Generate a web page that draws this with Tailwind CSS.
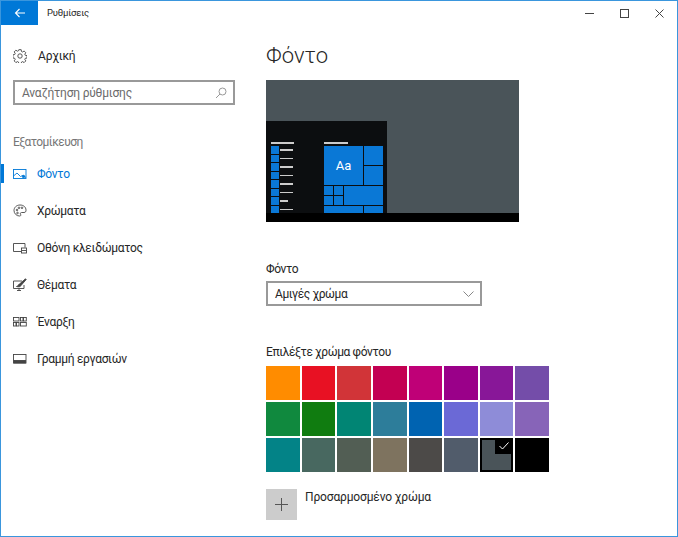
<!DOCTYPE html>
<html lang="el">
<head>
    <meta charset="UTF-8">
    <title>Ρυθμίσεις</title>
    <script src="https://cdn.jsdelivr.net/npm/@tailwindcss/browser@4"></script>
</head>
<body class="bg-white">
<div class="w-[678px] h-[537px] overflow-hidden border border-[#3a96dd] bg-white text-[#262626] font-['Roboto',sans-serif] flex flex-col">
    <!-- title bar -->
    <header class="h-[24px] flex items-center shrink-0">
        <button class="w-[37px] h-[24px] bg-[#0078d7] flex items-center justify-center">
            <svg width="12" height="12" viewBox="0 0 12 12" fill="none" stroke="#fff" stroke-width="1.1"><path d="M1.500 6H11M5.500 2 1.500 6l4 4"/></svg>
        </button>
        <span class="ml-[9px] text-[9.500px] tracking-[-0.2px] leading-none">Ρυθμίσεις</span>
        <div class="ml-auto flex items-center pr-[13px] gap-[26px]">
            <svg width="9" height="9" viewBox="0 0 9 9" stroke="#444" fill="none"><path d="M0 4.500h9"/></svg>
            <svg width="9" height="9" viewBox="0 0 9 9" stroke="#444" fill="none"><rect x=".5" y=".5" width="8" height="8"/></svg>
            <svg width="9" height="9" viewBox="0 0 9 9" stroke="#444" fill="none"><path d="M.5.5l8 8M8.500.5l-8 8"/></svg>
        </div>
    </header>

    <div class="flex flex-1 min-h-0">
        <!-- sidebar -->
        <aside class="w-[265px] shrink-0 pt-[21px]">
            <a class="flex items-center h-[20px] pl-[12px] text-[12px] tracking-[-0.2px]">
                <svg width="14" height="14" viewBox="0 0 14 14" fill="none" stroke="#444" stroke-width=".9"><circle cx="7" cy="7" r="2.200"/><path d="M5.800.7h2.400l.3 1.800 1.100.5 1.500-1 1.700 1.700-1 1.500.5 1.100 1.800.3v2.400l-1.800.3-.5 1.100 1 1.500-1.700 1.700-1.500-1-1.100.5-.3 1.800H5.800l-.3-1.800-1.100-.5-1.500 1-1.700-1.700 1-1.500-.5-1.100-1.800-.3V5.800l1.800-.3.5-1.100-1-1.500 1.700-1.700 1.500 1 1.100-.5z"/></svg>
                <span class="ml-[11px]">Αρχική</span>
            </a>
            <div class="ml-[12px] mt-[14px] w-[222px] h-[25px] border-2 border-[#999] flex items-center pl-[7px] pr-[6px]">
                <span class="text-[12px] tracking-[-0.2px] text-[#6b6b6b]">Αναζήτηση ρύθμισης</span>
                <svg class="ml-auto" width="12" height="12" viewBox="0 0 12 12" fill="none" stroke="#999"><circle cx="7.500" cy="4.500" r="3.500"/><path d="M5 7l-4 4"/></svg>
            </div>
            <div class="ml-[12px] mt-[27px] h-[20px] flex items-center text-[12px] tracking-[-0.55px] text-[#767676]">Εξατομίκευση</div>

            <nav class="mt-[12px] flex flex-col gap-[17px] text-[12px] tracking-[-0.3px]">
                <a class="relative flex items-center h-[20px] pl-[12px] text-[#0078d7]">
                    <span class="absolute left-0 top-0 w-[3px] h-[19px] bg-[#0078d7]"></span>
                    <svg width="14" height="12" viewBox="0 0 14 12" fill="none" stroke="#0078d7" stroke-width=".9"><rect x=".5" y="1.500" width="12.500" height="9"/><path d="M.5 8l3.500-3 3.500 3.500 2-1 3.500 2"/><circle cx="10.500" cy="8.500" r="1.200" fill="#0078d7"/></svg>
                    <span class="ml-[10px]">Φόντο</span>
                </a>
                <a class="flex items-center h-[20px] pl-[12px]">
                    <svg width="14" height="14" viewBox="0 0 14 14" fill="none" stroke="#444" stroke-width=".9"><path d="M7 1C3.500 1 1 3.500 1 6.500S3.500 12 6.500 12c1.500 0 1.500-1 1-1.800-.5-.9 0-1.700 1-1.700h2.500c1.500 0 2-1 2-2.200C13 3 10.500 1 7 1z"/><circle cx="4" cy="6" r=".8"/><circle cx="6" cy="3.800" r=".8"/><circle cx="9" cy="3.800" r=".8"/><circle cx="4.500" cy="9" r=".8"/></svg>
                    <span class="ml-[10px]">Χρώματα</span>
                </a>
                <a class="flex items-center h-[20px] pl-[12px]">
                    <svg width="14" height="12" viewBox="0 0 14 12" fill="none" stroke="#444" stroke-width=".9"><path d="M8 9.500H.5v-8h11.500v4"/><rect x="8.500" y="6" width="5" height="5"/><path d="M9 8.500h4"/></svg>
                    <span class="ml-[10px]">Οθόνη κλειδώματος</span>
                </a>
                <a class="flex items-center h-[20px] pl-[12px]">
                    <svg width="14" height="14" viewBox="0 0 14 14" fill="none" stroke="#444" stroke-width=".9"><path d="M9 3H.5v7.500H11V7M4 12.500h4M6 10.500v2"/><path d="M3.500 8.500c1.500 0 1.500-2 3-2.500L12.500.8l.7.7L8 7.500c-.5 1.500-2.500 1.500-4.500 1z" fill="#444"/></svg>
                    <span class="ml-[10px]">Θέματα</span>
                </a>
                <a class="flex items-center h-[20px] pl-[12px]">
                    <svg width="14" height="12" viewBox="0 0 14 12" fill="none" stroke="#444" stroke-width=".9"><rect x=".5" y="1.500" width="5.500" height="3.500"/><rect x="7.500" y="1.500" width="2.500" height="3.500"/><rect x="10.500" y="1.500" width="2.800" height="3.500"/><rect x=".5" y="6.500" width="2.500" height="3.500"/><rect x="3.500" y="6.500" width="2.500" height="3.500"/><rect x="7.500" y="6.500" width="5.800" height="3.500"/></svg>
                    <span class="ml-[10px]">Έναρξη</span>
                </a>
                <a class="flex items-center h-[20px] pl-[12px]">
                    <svg width="14" height="12" viewBox="0 0 14 12" fill="none" stroke="#444" stroke-width=".9"><rect x=".5" y="1.500" width="12.500" height="8.500"/><rect x="1" y="7.500" width="11.500" height="2.500" fill="#444"/></svg>
                    <span class="ml-[10px]">Γραμμή εργασιών</span>
                </a>
            </nav>
        </aside>

        <!-- content -->
        <main class="flex-1 text-[12px] tracking-[-0.4px]">
            <h1 class="mt-[16px] h-[30px] text-[22px] leading-[30px] font-light tracking-normal">Φόντο</h1>

            <!-- preview -->
            <div class="mt-[9px] w-[253px] h-[142px] bg-[#4a5459] flex flex-col justify-end">
                <div class="w-[121px] h-[92px] bg-[#0c0e10] flex pl-[5px] pt-[21px]">
                    <div class="w-[24px]">
                        <div class="h-[2px] w-[23px] bg-[#ccc]"></div>
                        <div class="mt-[2px] grid grid-cols-[8px_13px] gap-x-[1px] gap-y-[1px] auto-rows-[7.500px] items-center">
                            <span class="h-full bg-[#0a78d6]"></span><span class="h-[1.500px] bg-[#ccc]"></span>
                            <span class="h-full bg-[#0a78d6]"></span><span class="h-[1.500px] bg-[#ccc]"></span>
                            <span class="h-full bg-[#0a78d6]"></span><span class="h-[1.500px] bg-[#ccc]"></span>
                            <span class="h-full bg-[#0a78d6]"></span><span class="h-[1.500px] bg-[#ccc]"></span>
                            <span class="h-full bg-[#0a78d6]"></span><span class="h-[1.500px] bg-[#ccc]"></span>
                            <span class="h-full bg-[#0a78d6]"></span><span class="h-[1.500px] bg-[#ccc]"></span>
                            <span class="h-full bg-[#0a78d6]"></span><span class="h-[1.500px] w-[8px] bg-[#ccc]"></span>
                            <span class="h-full bg-[#0a78d6]"></span><span class="h-[1.500px] bg-[#ccc]"></span>
                        </div>
                    </div>
                    <div class="ml-[29px] w-[59px]">
                        <div class="h-[2px] w-[24px] bg-[#ccc]"></div>
                        <div class="mt-[2px] grid grid-cols-[9px_9px_19px_19px] grid-rows-[19px_19px_9px_9px_7px] gap-[1px]">
                            <div class="col-span-3 row-span-2 pt-[1px] bg-[#0a78d6] text-white flex items-center justify-center text-[13px] tracking-normal">Aa</div>
                            <div class="bg-[#0a78d6]"></div>
                            <div class="bg-[#0a78d6]"></div>
                            <div class="bg-[#0a78d6]"></div>
                            <div class="bg-[#0a78d6]"></div>
                            <div class="col-span-2 row-span-2 bg-[#0a78d6]"></div>
                            <div class="bg-[#0a78d6]"></div>
                            <div class="bg-[#0a78d6]"></div>
                            <div class="col-span-3 bg-[#0a78d6]"></div>
                            <div class="bg-[#0a78d6]"></div>
                        </div>
                    </div>
                </div>
                <div class="h-[9px] bg-black"></div>
            </div>

            <label class="mt-[37px] h-[20px] flex items-center">Φόντο</label>
            <div class="mt-[2px] w-[216px] h-[25px] border-2 border-[#999] flex items-center pl-[7px] pr-[6px] pt-[1px]">
                <span>Αμιγές χρώμα</span>
                <svg class="ml-auto" width="11" height="6" viewBox="0 0 11 6" fill="none" stroke="#888"><path d="M.5.5l5 5 5-5"/></svg>
            </div>

            <div class="mt-[36px] h-[20px] flex items-center">Επιλέξτε χρώμα φόντου</div>

            <!-- colour swatches -->
            <div class="mt-[4px] w-[283px] grid grid-cols-8 auto-rows-[34px] gap-x-[2px] gap-y-[2px]">
                <div class="bg-[#ff8c00]"></div>
                <div class="bg-[#e81123]"></div>
                <div class="bg-[#d13438]"></div>
                <div class="bg-[#c30052]"></div>
                <div class="bg-[#bf0077]"></div>
                <div class="bg-[#9a0089]"></div>
                <div class="bg-[#881798]"></div>
                <div class="bg-[#744da9]"></div>
                <div class="bg-[#10893e]"></div>
                <div class="bg-[#107c10]"></div>
                <div class="bg-[#018574]"></div>
                <div class="bg-[#2d7d9a]"></div>
                <div class="bg-[#0063b1]"></div>
                <div class="bg-[#6b69d6]"></div>
                <div class="bg-[#8e8cd8]"></div>
                <div class="bg-[#8764b8]"></div>
                <div class="bg-[#038387]"></div>
                <div class="bg-[#486860]"></div>
                <div class="bg-[#525e54]"></div>
                <div class="bg-[#7e735f]"></div>
                <div class="bg-[#4c4a48]"></div>
                <div class="bg-[#515c6b]"></div>
                <div class="relative bg-[#4a5459] border-2 border-black">
                    <div class="absolute top-[-2px] right-[-2px] w-[18px] h-[16px] bg-black flex items-center justify-center">
                        <svg width="10" height="8" viewBox="0 0 10 8" fill="none" stroke="#fff"><path d="M.5 4l3 3 6-6.500"/></svg>
                    </div>
                </div>
                <div class="bg-black"></div>
            </div>

            <div class="mt-[17px] flex items-start">
                <button class="w-[31px] h-[31px] bg-[#cccccc] flex items-center justify-center">
                    <svg width="13" height="13" viewBox="0 0 13 13" stroke="#555" fill="none"><path d="M6.500 0v13M0 6.500h13"/></svg>
                </button>
                <span class="ml-[8px] leading-[16px] tracking-[-0.15px]">Προσαρμοσμένο χρώμα</span>
            </div>
        </main>
    </div>
</div>
</body>
</html>
